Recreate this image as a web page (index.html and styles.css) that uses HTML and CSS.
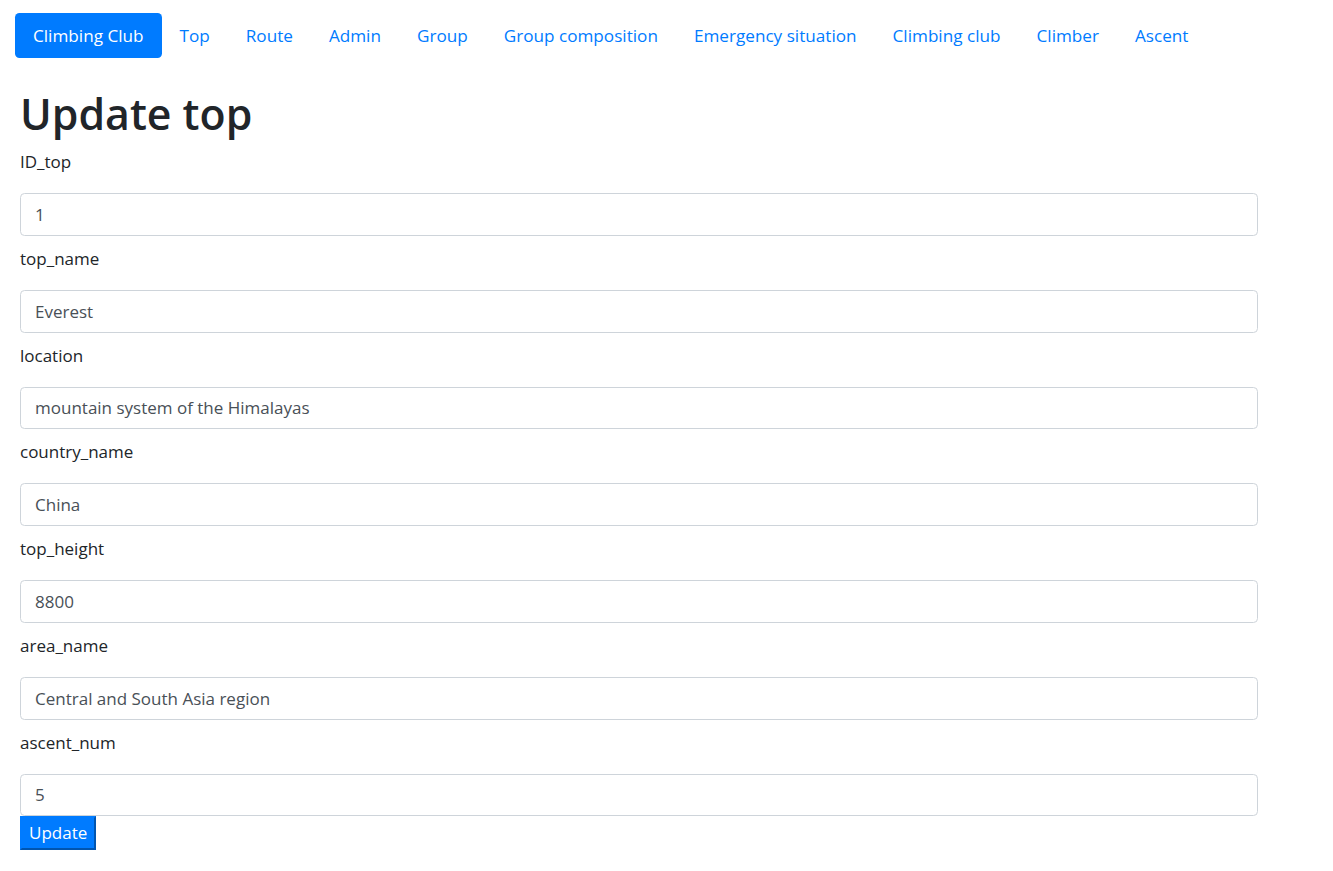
FILE: index.html
```html
<!DOCTYPE html>
<html lang="en">
<head>
<meta charset="utf-8">
<title>Update top</title>
<link rel="stylesheet" href="styles.css">
</head>
<body>
<nav class="nav">
  <a class="nav-link active" href="#">Climbing Club</a>
  <a class="nav-link" href="#">Top</a>
  <a class="nav-link" href="#">Route</a>
  <a class="nav-link" href="#">Admin</a>
  <a class="nav-link" href="#">Group</a>
  <a class="nav-link" href="#">Group composition</a>
  <a class="nav-link" href="#">Emergency situation</a>
  <a class="nav-link" href="#">Climbing club</a>
  <a class="nav-link" href="#">Climber</a>
  <a class="nav-link" href="#">Ascent</a>
</nav>
<main class="content">
  <h1 class="title">Update top</h1>
  <form class="form">
    <label class="label">ID_top</label>
    <input class="control" type="text" value="1">
    <label class="label">top_name</label>
    <input class="control" type="text" value="Everest">
    <label class="label">location</label>
    <input class="control" type="text" value="mountain system of the Himalayas">
    <label class="label">country_name</label>
    <input class="control" type="text" value="China">
    <label class="label">top_height</label>
    <input class="control" type="text" value="8800">
    <label class="label">area_name</label>
    <input class="control" type="text" value="Central and South Asia region">
    <label class="label">ascent_num</label>
    <input class="control" type="text" value="5">
    <button class="btn" type="button">Update</button>
  </form>
</main>
</body>
</html>
```

FILE: styles.css
```css
html, body {
  margin: 0;
  padding: 0;
  background: #ffffff;
}

body {
  font-family: "Open Sans", "Noto Sans", sans-serif;
  font-size: 17px;
  line-height: 27px;
  color: #212529;
}

.nav {
  display: flex;
  flex-wrap: wrap;
  padding: 13px 0 0 15px;
}

.nav-link {
  display: block;
  padding: 9px 18px;
  line-height: 27px;
  font-size: 17.15px;
  color: #007bff;
  text-decoration: none;
  border-radius: 4.5px;
}

.nav-link.active {
  background: #007bff;
  color: #ffffff;
}

.content {
  padding-left: 20px;
  width: 1238px;
}

.title {
  margin: 29px 0 7px 0;
  font-size: 42.8px;
  line-height: 54px;
  font-weight: 600;
  color: #212529;
}

.form {
  display: flex;
  flex-direction: column;
  align-items: flex-start;
}

.label {
  display: block;
  line-height: 27px;
  margin: 9px 0 18px 0;
}

.label:first-child {
  margin-top: 0;
}

.control {
  box-sizing: border-box;
  width: 1238px;
  height: 42.75px;
  padding: 6px 14px;
  font-family: "Open Sans", "Noto Sans", sans-serif;
  font-size: 17px;
  color: #495057;
  background: #ffffff;
  border: 1px solid #ced4da;
  border-radius: 4.5px;
  outline: none;
}

.btn {
  box-sizing: border-box;
  height: 34px;
  padding: 0 7px;
  font-family: "Open Sans", "Noto Sans", sans-serif;
  font-size: 17px;
  line-height: 28px;
  color: #ffffff;
  background: #007bff;
  border-width: 2px;
  border-style: solid;
  border-color: #007bff #0055b0 #0055b0 #007bff;
  border-radius: 0;
}
```
